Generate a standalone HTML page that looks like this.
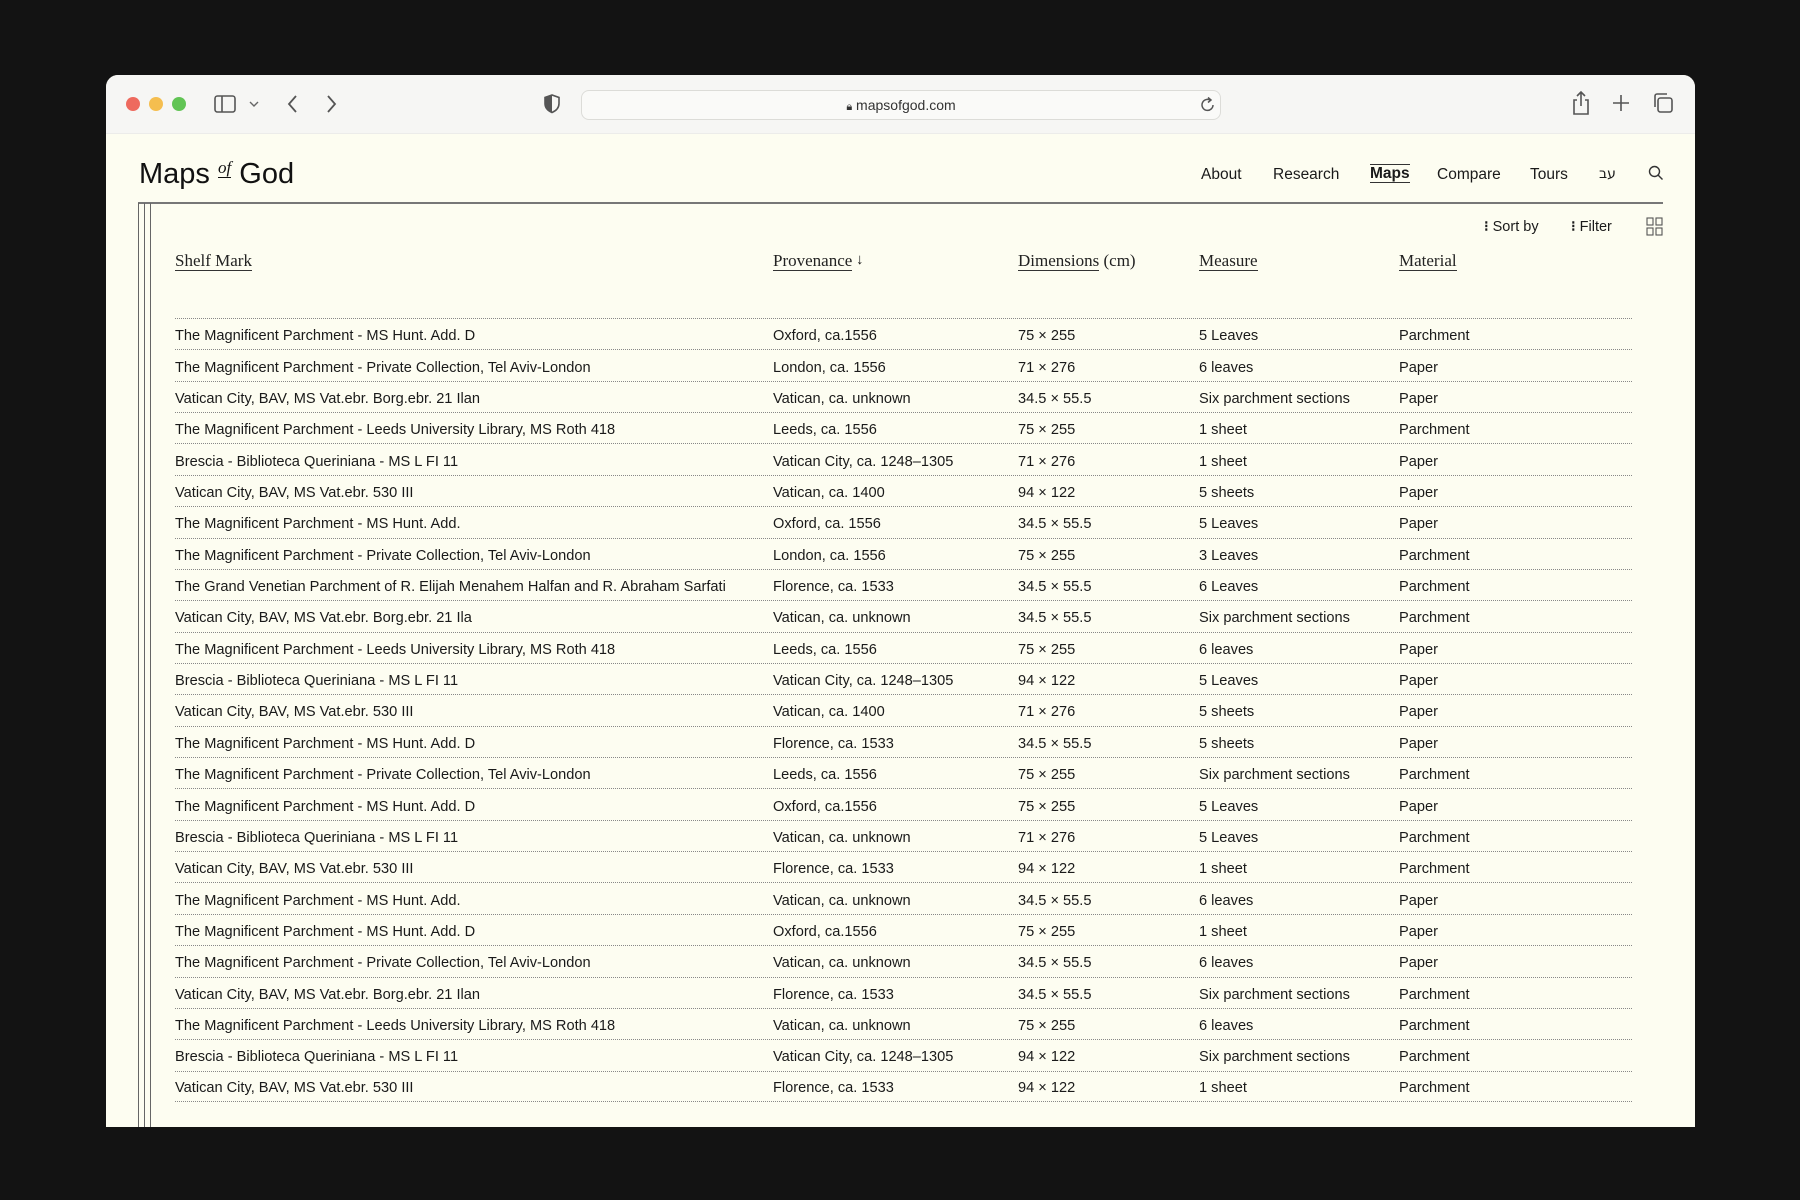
<!DOCTYPE html>
<html><head><meta charset="utf-8"><style>
*{margin:0;padding:0;box-sizing:border-box}
body{width:1800px;height:1200px;background:#131313;position:relative;overflow:hidden;font-family:"Liberation Sans",Helvetica,Arial,sans-serif;color:#1a1a1a}
.win{position:absolute;left:106px;top:75px;width:1589px;height:1052px;background:#fdfdf1;border-radius:12px 12px 0 0;overflow:hidden}
.tb{position:absolute;left:0;top:0;width:100%;height:59px;background:#f6f6f4;border-bottom:1px solid #ececea}
.dot{position:absolute;top:22px;width:14px;height:14px;border-radius:50%}
.url{position:absolute;left:475px;top:15px;width:640px;height:30px;border:1.5px solid #dcdcd8;border-radius:8px;background:#fafaf8;font-size:14px;color:#333;text-align:center;line-height:28px}
.abs{position:absolute}
.nav{position:absolute;top:91px;font-size:15.5px;color:#1a1a1a}
.vl{position:absolute;top:128px;bottom:0;width:1px;background:#666}
.hd{position:absolute;top:177px;font-family:"Liberation Serif",serif;font-size:17px;color:#222;border-bottom:1.5px solid #333;line-height:18px}
.rows{position:absolute;left:69px;top:243px;width:1457px}
.r{height:31.36px;border-top:1px dotted #888;display:flex;align-items:center;font-size:14.6px;color:#1a1a1a;padding-top:4px}
.r:last-child{border-bottom:1px dotted #888}
.r span{display:block;white-space:nowrap}
.c1{width:598px}.c2{width:245px}.c3{width:181px}.c4{width:200px}
</style></head><body>
<div class="win">
 <div class="tb">
  <div class="dot" style="left:20px;background:#ee6a5e"></div>
  <div class="dot" style="left:43px;background:#f5be4f"></div>
  <div class="dot" style="left:66px;background:#61c454"></div>
  <svg class="abs" style="left:108px;top:20px" width="22" height="18" viewBox="0 0 22 18"><rect x="1" y="1" width="20" height="16" rx="2.5" fill="none" stroke="#555" stroke-width="1.6"/><line x1="8" y1="1" x2="8" y2="17" stroke="#555" stroke-width="1.6"/></svg>
  <svg class="abs" style="left:143px;top:25px" width="10" height="8"><path d="M1 2l4 4 4-4" fill="none" stroke="#666" stroke-width="1.4"/></svg>
  <svg class="abs" style="left:180px;top:19px" width="12" height="20"><path d="M10 2L3 10l7 8" fill="none" stroke="#555" stroke-width="1.8"/></svg>
  <svg class="abs" style="left:220px;top:19px" width="12" height="20"><path d="M2 2l7 8-7 8" fill="none" stroke="#555" stroke-width="1.8"/></svg>
  <svg class="abs" style="left:438px;top:19px" width="16" height="20"><path d="M8 1L1 3.5v6c0 4.5 3.5 7.5 7 9 3.5-1.5 7-4.5 7-9v-6z" fill="none" stroke="#555" stroke-width="1.6"/><path d="M8 1L1 3.5v6c0 4.5 3.5 7.5 7 9z" fill="#555"/></svg>
  <div class="url"><span style="font-size:11px">🔒︎</span> mapsofgod.com</div>
  <svg class="abs" style="left:1094px;top:21px" width="16" height="18"><path d="M13 9a5.5 5.5 0 1 1-3-5" fill="none" stroke="#555" stroke-width="1.5"/><path d="M8 1.5l3 2.5-3 2.5" fill="none" stroke="#555" stroke-width="1.5"/></svg>
  <svg class="abs" style="left:1465px;top:15px" width="20" height="26"><path d="M6 10H3v14h14V10h-3M10 2v14M6 6l4-4 4 4" fill="none" stroke="#555" stroke-width="1.6"/></svg>
  <svg class="abs" style="left:1506px;top:19px" width="18" height="18"><path d="M9 1v16M1 9h16" stroke="#555" stroke-width="1.6"/></svg>
  <svg class="abs" style="left:1546px;top:17px" width="22" height="22"><rect x="6" y="6" width="14" height="14" rx="2.5" fill="none" stroke="#555" stroke-width="1.6"/><path d="M3 15V4a2 2 0 0 1 2-2h10" fill="none" stroke="#555" stroke-width="1.6"/></svg>
 </div>
 <div class="abs" style="left:33px;top:83px;font-size:29px;color:#111;white-space:nowrap">Maps <span style="font-family:'Liberation Serif',serif;font-style:italic;font-size:17px;position:relative;top:-10px;border-bottom:1px solid #111">of</span> God</div>
 <div class="nav" style="left:1095px">About</div>
 <div class="nav" style="left:1167px">Research</div>
 <div class="nav" style="left:1264px;font-weight:bold;border-top:1.5px solid #333;border-bottom:1.5px solid #333;top:89px;line-height:17px">Maps</div>
 <div class="nav" style="left:1331px">Compare</div>
 <div class="nav" style="left:1424px">Tours</div>
 <div class="nav" style="left:1493px;font-family:'DejaVu Sans',sans-serif;font-size:14px">עב</div>
 <svg class="abs" style="left:1542px;top:90px" width="16" height="16"><circle cx="6.5" cy="6.5" r="5" fill="none" stroke="#333" stroke-width="1.4"/><path d="M10 10l4.5 4.5" stroke="#333" stroke-width="1.4"/></svg>
 <div class="abs" style="left:32px;top:127px;width:1525px;height:1.5px;background:#777"></div>
 <div class="vl" style="left:32px"></div><div class="vl" style="left:38px"></div><div class="vl" style="left:44px"></div>
 <div class="abs" style="left:1378px;top:144px;font-size:14.5px"><b>⁝</b> Sort by</div>
 <div class="abs" style="left:1465px;top:144px;font-size:14.5px"><b>⁝</b> Filter</div>
 <svg class="abs" style="left:1540px;top:142px" width="17" height="19"><g fill="none" stroke="#555" stroke-width="1.1"><rect x="1" y="1" width="6" height="7"/><rect x="10" y="1" width="6" height="7"/><rect x="1" y="11" width="6" height="7"/><rect x="10" y="11" width="6" height="7"/></g></svg>
 <div class="hd" style="left:69px">Shelf Mark</div>
 <div class="hd" style="left:667px">Provenance</div><div class="abs" style="left:750px;top:176px;font-size:15px">↓</div>
 <div class="hd" style="left:912px;border:none"><span style="border-bottom:1.5px solid #333">Dimensions</span> (cm)</div>
 <div class="hd" style="left:1093px">Measure</div>
 <div class="hd" style="left:1293px">Material</div>
 <div class="rows">
<div class="r"><span class="c1">The Magnificent Parchment - MS Hunt. Add. D</span><span class="c2">Oxford, ca.1556</span><span class="c3">75 × 255</span><span class="c4">5 Leaves</span><span>Parchment</span></div>
<div class="r"><span class="c1">The Magnificent Parchment - Private Collection, Tel Aviv-London</span><span class="c2">London, ca. 1556</span><span class="c3">71 × 276</span><span class="c4">6 leaves</span><span>Paper</span></div>
<div class="r"><span class="c1">Vatican City, BAV, MS Vat.ebr. Borg.ebr. 21 Ilan</span><span class="c2">Vatican, ca. unknown</span><span class="c3">34.5 × 55.5</span><span class="c4">Six parchment sections</span><span>Paper</span></div>
<div class="r"><span class="c1">The Magnificent Parchment - Leeds University Library, MS Roth 418</span><span class="c2">Leeds, ca. 1556</span><span class="c3">75 × 255</span><span class="c4">1 sheet</span><span>Parchment</span></div>
<div class="r"><span class="c1">Brescia - Biblioteca Queriniana - MS L FI 11</span><span class="c2">Vatican City, ca. 1248–1305</span><span class="c3">71 × 276</span><span class="c4">1 sheet</span><span>Paper</span></div>
<div class="r"><span class="c1">Vatican City, BAV, MS Vat.ebr. 530 III</span><span class="c2">Vatican, ca. 1400</span><span class="c3">94 × 122</span><span class="c4">5 sheets</span><span>Paper</span></div>
<div class="r"><span class="c1">The Magnificent Parchment - MS Hunt. Add.</span><span class="c2">Oxford, ca. 1556</span><span class="c3">34.5 × 55.5</span><span class="c4">5 Leaves</span><span>Paper</span></div>
<div class="r"><span class="c1">The Magnificent Parchment - Private Collection, Tel Aviv-London</span><span class="c2">London, ca. 1556</span><span class="c3">75 × 255</span><span class="c4">3 Leaves</span><span>Parchment</span></div>
<div class="r"><span class="c1">The Grand Venetian Parchment of R. Elijah Menahem Halfan and R. Abraham Sarfati</span><span class="c2">Florence, ca. 1533</span><span class="c3">34.5 × 55.5</span><span class="c4">6 Leaves</span><span>Parchment</span></div>
<div class="r"><span class="c1">Vatican City, BAV, MS Vat.ebr. Borg.ebr. 21 Ila</span><span class="c2">Vatican, ca. unknown</span><span class="c3">34.5 × 55.5</span><span class="c4">Six parchment sections</span><span>Parchment</span></div>
<div class="r"><span class="c1">The Magnificent Parchment - Leeds University Library, MS Roth 418</span><span class="c2">Leeds, ca. 1556</span><span class="c3">75 × 255</span><span class="c4">6 leaves</span><span>Paper</span></div>
<div class="r"><span class="c1">Brescia - Biblioteca Queriniana - MS L FI 11</span><span class="c2">Vatican City, ca. 1248–1305</span><span class="c3">94 × 122</span><span class="c4">5 Leaves</span><span>Paper</span></div>
<div class="r"><span class="c1">Vatican City, BAV, MS Vat.ebr. 530 III</span><span class="c2">Vatican, ca. 1400</span><span class="c3">71 × 276</span><span class="c4">5 sheets</span><span>Paper</span></div>
<div class="r"><span class="c1">The Magnificent Parchment - MS Hunt. Add. D</span><span class="c2">Florence, ca. 1533</span><span class="c3">34.5 × 55.5</span><span class="c4">5 sheets</span><span>Paper</span></div>
<div class="r"><span class="c1">The Magnificent Parchment - Private Collection, Tel Aviv-London</span><span class="c2">Leeds, ca. 1556</span><span class="c3">75 × 255</span><span class="c4">Six parchment sections</span><span>Parchment</span></div>
<div class="r"><span class="c1">The Magnificent Parchment - MS Hunt. Add. D</span><span class="c2">Oxford, ca.1556</span><span class="c3">75 × 255</span><span class="c4">5 Leaves</span><span>Paper</span></div>
<div class="r"><span class="c1">Brescia - Biblioteca Queriniana - MS L FI 11</span><span class="c2">Vatican, ca. unknown</span><span class="c3">71 × 276</span><span class="c4">5 Leaves</span><span>Parchment</span></div>
<div class="r"><span class="c1">Vatican City, BAV, MS Vat.ebr. 530 III</span><span class="c2">Florence, ca. 1533</span><span class="c3">94 × 122</span><span class="c4">1 sheet</span><span>Parchment</span></div>
<div class="r"><span class="c1">The Magnificent Parchment - MS Hunt. Add.</span><span class="c2">Vatican, ca. unknown</span><span class="c3">34.5 × 55.5</span><span class="c4">6 leaves</span><span>Paper</span></div>
<div class="r"><span class="c1">The Magnificent Parchment - MS Hunt. Add. D</span><span class="c2">Oxford, ca.1556</span><span class="c3">75 × 255</span><span class="c4">1 sheet</span><span>Paper</span></div>
<div class="r"><span class="c1">The Magnificent Parchment - Private Collection, Tel Aviv-London</span><span class="c2">Vatican, ca. unknown</span><span class="c3">34.5 × 55.5</span><span class="c4">6 leaves</span><span>Paper</span></div>
<div class="r"><span class="c1">Vatican City, BAV, MS Vat.ebr. Borg.ebr. 21 Ilan</span><span class="c2">Florence, ca. 1533</span><span class="c3">34.5 × 55.5</span><span class="c4">Six parchment sections</span><span>Parchment</span></div>
<div class="r"><span class="c1">The Magnificent Parchment - Leeds University Library, MS Roth 418</span><span class="c2">Vatican, ca. unknown</span><span class="c3">75 × 255</span><span class="c4">6 leaves</span><span>Parchment</span></div>
<div class="r"><span class="c1">Brescia - Biblioteca Queriniana - MS L FI 11</span><span class="c2">Vatican City, ca. 1248–1305</span><span class="c3">94 × 122</span><span class="c4">Six parchment sections</span><span>Parchment</span></div>
<div class="r"><span class="c1">Vatican City, BAV, MS Vat.ebr. 530 III</span><span class="c2">Florence, ca. 1533</span><span class="c3">94 × 122</span><span class="c4">1 sheet</span><span>Parchment</span></div>
 </div>
</div>
</body></html>
